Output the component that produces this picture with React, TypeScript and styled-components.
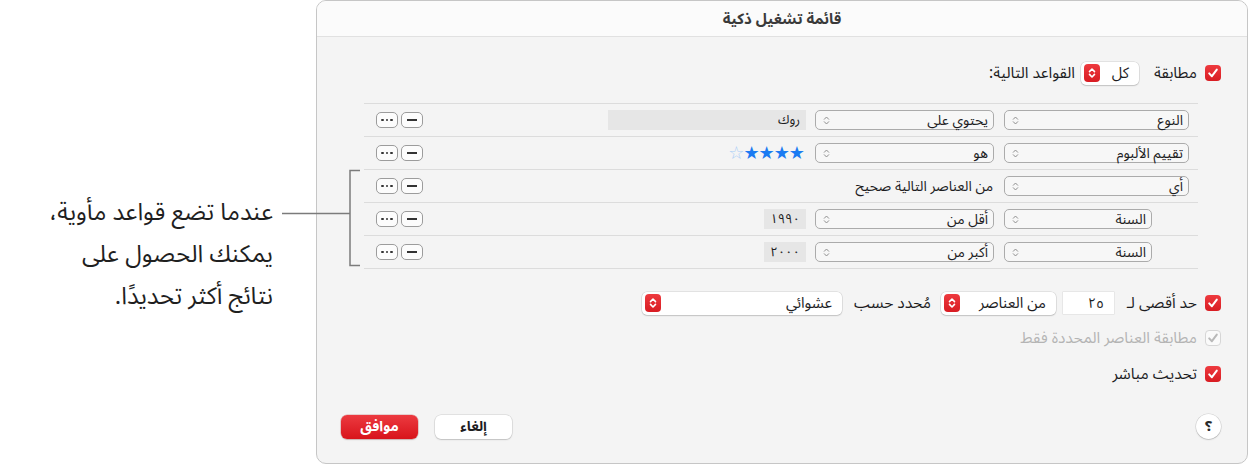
import React from "react";
import styled, { createGlobalStyle } from "styled-components";

const FONT = `"Noto Sans Arabic", "DejaVu Sans", "Noto Sans", sans-serif`;

const Global = createGlobalStyle`
  html, body { margin: 0; padding: 0; background: #ffffff; }
  body { font-family: ${FONT}; }
`;

const Page = styled.div`
  position: relative;
  display: flex;
  width: 1248px;
  height: 466px;
  background: #ffffff;
`;

const Callout = styled.div`
  width: 316px;
  flex-shrink: 0;
  box-sizing: border-box;
  padding: 192px 43px 0 0;
  direction: rtl;
  text-align: right;
  font: 400 24px/42px ${FONT};
  color: #1f1f1f;
`;

const CalloutLine = styled.span`
  display: block;
  height: 42px;
  white-space: nowrap;
`;

const Bracket = styled.svg`
  position: absolute;
  left: 276px;
  top: 166px;
  overflow: visible;
`;

const Window = styled.div`
  width: 932px;
  height: 464px;
  box-sizing: border-box;
  border: 1px solid #c6c6c6;
  border-radius: 10px;
  background: #f4f4f4;
  overflow: hidden;
  display: flex;
  flex-direction: column;
  font-family: ${FONT};
  color: #1d1d1f;
`;

const TitleBar = styled.div`
  height: 35px;
  flex-shrink: 0;
  display: flex;
  align-items: center;
  justify-content: center;
  background: #fbfbfb;
  border-bottom: 1px solid #e1e1e1;
  direction: rtl;
  font-size: 15px;
  font-weight: bold;
  color: #3a3a3a;
`;

const Body = styled.div`
  flex: 1;
  direction: rtl;
  display: flex;
  flex-direction: column;
  padding: 24px 26px 24px 24px;
`;

const Row = styled.div<{ $top: number; $h?: number; $dim?: boolean }>`
  display: flex;
  align-items: center;
  height: ${(p) => p.$h ?? 22}px;
  margin-top: ${(p) => p.$top}px;
  font-size: 15.5px;
  color: ${(p) => (p.$dim ? "#b4b4b4" : "#1d1d1f")};
`;

const Label = styled.span<{ $gap?: number; $w?: number }>`
  margin-right: ${(p) => p.$gap ?? 8}px;
  ${(p) => (p.$w ? `width: ${p.$w}px; flex-shrink: 0;` : "")}
  white-space: nowrap;
`;

const Box = styled.span<{ $disabled?: boolean }>`
  width: 16px;
  height: 16px;
  box-sizing: border-box;
  border-radius: 4px;
  flex-shrink: 0;
  display: flex;
  align-items: center;
  justify-content: center;
  background: ${(p) =>
    p.$disabled ? "#fafafa" : "linear-gradient(#ee3a3f, #d81c22)"};
  border: ${(p) => (p.$disabled ? "1px solid #d6d6d6" : "none")};
`;

const Popup = styled.div<{ $w: number; $gap: number }>`
  width: ${(p) => p.$w}px;
  height: 23px;
  margin-right: ${(p) => p.$gap}px;
  box-sizing: border-box;
  flex-shrink: 0;
  display: flex;
  align-items: center;
  justify-content: space-between;
  padding: 0 10px 0 3px;
  background: #ffffff;
  border-radius: 5px;
  box-shadow: 0 0 0 0.5px rgba(0, 0, 0, 0.14), 0 1px 1.5px rgba(0, 0, 0, 0.14);
  font-size: 15px;
  color: #1d1d1f;
`;

const RedStep = styled.span`
  width: 16px;
  height: 18px;
  border-radius: 4px;
  background: linear-gradient(#ee3a3f, #d81c22);
  display: flex;
  align-items: center;
  justify-content: center;
`;

const NumField = styled.div`
  width: 51px;
  height: 22px;
  margin-right: 3px;
  box-sizing: border-box;
  padding-right: 10px;
  display: flex;
  align-items: center;
  background: #ffffff;
  box-shadow: 0 0 0 0.5px rgba(0, 0, 0, 0.1);
  font-size: 14px;
`;

const Table = styled.div`
  margin: 18px 23px 0 23px;
  border-top: 1px solid #dcdcdc;
`;

const RuleRow = styled.div`
  height: 32px;
  display: flex;
  align-items: center;
  border-bottom: 1px solid #dcdcdc;
  padding: 0 9px 0 12px;
`;

const FirstCol = styled.div`
  width: 185px;
  flex-shrink: 0;
  display: flex;
`;

const Select = styled.div<{ $w: number; $gap?: number }>`
  width: ${(p) => p.$w}px;
  height: 20px;
  margin-right: ${(p) => p.$gap ?? 0}px;
  box-sizing: border-box;
  flex-shrink: 0;
  border: 1px solid #ababab;
  border-radius: 5px;
  display: flex;
  align-items: center;
  justify-content: space-between;
  padding: 0 5px 0 7px;
  background: #f7f7f7;
  font-size: 14px;
  color: #1d1d1f;
`;

const ValueField = styled.div<{ $w: number }>`
  width: ${(p) => p.$w}px;
  height: 20px;
  margin-right: 9px;
  box-sizing: border-box;
  padding-right: 6px;
  display: flex;
  align-items: center;
  background: #e6e6e6;
  font-size: 13px;
  color: #1d1d1f;
`;

const RuleText = styled.span`
  margin-right: 11px;
  font-size: 14px;
  color: #1d1d1f;
  white-space: nowrap;
`;

const Stars = styled.span`
  margin-right: 11px;
  font-size: 18px;
  letter-spacing: -1px;
  color: #1b7bf2;
  white-space: nowrap;
`;

const EmptyStar = styled.span`
  color: #a9cdf6;
`;

const SmallButtons = styled.div`
  margin-right: auto;
  display: flex;
  gap: 3px;
`;

const SmallButton = styled.div`
  width: 22px;
  height: 16px;
  box-sizing: border-box;
  border: 1px solid #9c9c9c;
  border-radius: 5px;
  background: #fcfcfc;
  display: flex;
  align-items: center;
  justify-content: center;
  gap: 2px;
`;

const Dot = styled.span`
  width: 2.5px;
  height: 2.5px;
  border-radius: 50%;
  background: #333;
`;

const Dash = styled.span`
  width: 10px;
  height: 1.5px;
  background: #333;
`;

const Footer = styled.div`
  margin-top: auto;
  display: flex;
  align-items: center;
  justify-content: space-between;
`;

const Help = styled.div`
  width: 25px;
  height: 25px;
  border-radius: 50%;
  background: #ffffff;
  box-shadow: 0 0 0 0.5px rgba(0, 0, 0, 0.15), 0 1px 1.5px rgba(0, 0, 0, 0.15);
  display: flex;
  align-items: center;
  justify-content: center;
  font-size: 14px;
  font-weight: bold;
  color: #2a2a2a;
`;

const Actions = styled.div`
  display: flex;
  gap: 17px;
`;

const Button = styled.div<{ $primary?: boolean }>`
  width: 77px;
  height: 24px;
  border-radius: 6px;
  display: flex;
  align-items: center;
  justify-content: center;
  font-size: 14px;
  font-weight: bold;
  color: ${(p) => (p.$primary ? "#ffffff" : "#1d1d1f")};
  background: ${(p) =>
    p.$primary ? "linear-gradient(#ec3a40, #d8141b)" : "#ffffff"};
  box-shadow: ${(p) =>
    p.$primary
      ? "0 0 0 0.5px rgba(160,0,0,0.3), 0 1px 1.5px rgba(0,0,0,0.15)"
      : "0 0 0 0.5px rgba(0,0,0,0.14), 0 1px 1.5px rgba(0,0,0,0.15)"};
`;

const Check = ({ color = "#fff" }: { color?: string }) => (
  <svg width="12" height="12" viewBox="0 0 12 12">
    <path
      d="M2.2 6.4 L4.9 9.2 L9.8 2.6"
      fill="none"
      stroke={color}
      strokeWidth="2"
      strokeLinecap="round"
      strokeLinejoin="round"
    />
  </svg>
);

const Checkbox = ({ disabled }: { disabled?: boolean }) => (
  <Box $disabled={disabled}>
    <Check color={disabled ? "#b9b9b9" : "#ffffff"} />
  </Box>
);

const Chevrons = ({ color, w = 7, h = 11, sw = 1.1 }: { color: string; w?: number; h?: number; sw?: number }) => (
  <svg width={w} height={h} viewBox="0 0 8 12">
    <path
      d="M1.5 4.6 L4 2 L6.5 4.6 M1.5 7.4 L4 10 L6.5 7.4"
      fill="none"
      stroke={color}
      strokeWidth={sw}
      strokeLinecap="round"
      strokeLinejoin="round"
    />
  </svg>
);

const Stepper = () => (
  <RedStep>
    <Chevrons color="#ffffff" w={8} h={12} sw={1.6} />
  </RedStep>
);

const Sel = ({ w, gap, children }: { w: number; gap?: number; children: React.ReactNode }) => (
  <Select $w={w} $gap={gap}>
    <span>{children}</span>
    <Chevrons color="#8a8a8a" />
  </Select>
);

const Tools = () => (
  <SmallButtons>
    <SmallButton>
      <Dash />
    </SmallButton>
    <SmallButton>
      <Dot />
      <Dot />
      <Dot />
    </SmallButton>
  </SmallButtons>
);

export default function App() {
  return (
    <Page>
      <Global />
      <Callout>
        <CalloutLine>عندما تضع قواعد مأوية،</CalloutLine>
        <CalloutLine>يمكنك الحصول على</CalloutLine>
        <CalloutLine>نتائج أكثر تحديدًا.</CalloutLine>
      </Callout>
      <Bracket width="90" height="104" viewBox="0 0 90 104">
        <path
          d="M6 47.5 H74 M84 4.5 H74 V99.5 H84"
          fill="none"
          stroke="#7b7b7b"
          strokeWidth="1.5"
        />
      </Bracket>
      <Window>
        <TitleBar>قائمة تشغيل ذكية</TitleBar>
        <Body>
          <Row $top={0} $h={24}>
            <Checkbox />
            <Label $w={48}>مطابقة</Label>
            <Popup $w={58} $gap={10}>
              <span>كل</span>
              <Stepper />
            </Popup>
            <Label $gap={6}>القواعد التالية:</Label>
          </Row>

          <Table>
            <RuleRow>
              <FirstCol>
                <Sel w={185}>النوع</Sel>
              </FirstCol>
              <Sel w={179} gap={10}>يحتوي على</Sel>
              <ValueField $w={198}>روك</ValueField>
              <Tools />
            </RuleRow>
            <RuleRow>
              <FirstCol>
                <Sel w={185}>تقييم الألبوم</Sel>
              </FirstCol>
              <Sel w={179} gap={10}>هو</Sel>
              <Stars>
                ★★★★<EmptyStar>☆</EmptyStar>
              </Stars>
              <Tools />
            </RuleRow>
            <RuleRow>
              <FirstCol>
                <Sel w={185}>أي</Sel>
              </FirstCol>
              <RuleText>من العناصر التالية صحيح</RuleText>
              <Tools />
            </RuleRow>
            <RuleRow>
              <FirstCol>
                <Sel w={148} gap={37}>السنة</Sel>
              </FirstCol>
              <Sel w={179} gap={10}>أقل من</Sel>
              <ValueField $w={42}>١٩٩٠</ValueField>
              <Tools />
            </RuleRow>
            <RuleRow>
              <FirstCol>
                <Sel w={148} gap={37}>السنة</Sel>
              </FirstCol>
              <Sel w={179} gap={10}>أكبر من</Sel>
              <ValueField $w={42}>٢٠٠٠</ValueField>
              <Tools />
            </RuleRow>
          </Table>

          <Row $top={23}>
            <Checkbox />
            <Label $w={80}>حد أقصى لـ</Label>
            <NumField>٢٥</NumField>
            <Popup $w={115} $gap={7}>
              <span>من العناصر</span>
              <Stepper />
            </Popup>
            <Label $gap={10} $w={80}>مُحدد حسب</Label>
            <Popup $w={200} $gap={9}>
              <span>عشوائي</span>
              <Stepper />
            </Popup>
          </Row>

          <Row $top={13} $dim>
            <Checkbox disabled />
            <Label>مطابقة العناصر المحددة فقط</Label>
          </Row>

          <Row $top={14}>
            <Checkbox />
            <Label>تحديث مباشر</Label>
          </Row>

          <Footer>
            <Help>؟</Help>
            <Actions>
              <Button>إلغاء</Button>
              <Button $primary>موافق</Button>
            </Actions>
          </Footer>
        </Body>
      </Window>
    </Page>
  );
}
